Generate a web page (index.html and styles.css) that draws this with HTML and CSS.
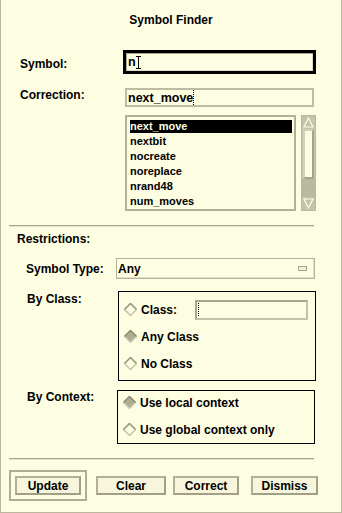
FILE: index.html
```html
<!DOCTYPE html>
<html lang="en">
<head>
  <meta charset="UTF-8">
  <title>Symbol Finder</title>
  <link rel="stylesheet" href="styles.css">
</head>
<body>
  <div class="window">
    <div class="title">Symbol Finder</div>

    <div class="row row-symbol">
      <span class="label">Symbol:</span>
      <div class="field field-active">n<span class="ibeam"></span></div>
    </div>

    <div class="row row-correction">
      <span class="label">Correction:</span>
      <div class="field field-plain">next_move<span class="dotcaret"></span></div>
    </div>

    <div class="listwrap">
      <ul class="list">
        <li class="selected">next_move</li>
        <li>nextbit</li>
        <li>nocreate</li>
        <li>noreplace</li>
        <li>nrand48</li>
        <li>num_moves</li>
      </ul>
      <div class="scrollbar">
        <div class="sb-arrow">
          <svg width="11" height="11" viewBox="0 0 11 11"><polygon points="5.5,1 10,10 1,10" fill="none" stroke="#fdfde4" stroke-width="1.2"/></svg>
        </div>
        <div class="sb-thumb"></div>
        <div class="sb-trough"></div>
        <div class="sb-arrow">
          <svg width="11" height="11" viewBox="0 0 11 11"><polygon points="1,1 10,1 5.5,10" fill="none" stroke="#fdfde4" stroke-width="1.2"/></svg>
        </div>
      </div>
    </div>

    <div class="sep sep-top"></div>

    <div class="section-label">Restrictions:</div>

    <div class="rrow rrow-type">
      <span class="rlabel">Symbol Type:</span>
      <div class="option">Any<span class="opt-ind"></span></div>
    </div>

    <div class="rrow rrow-class">
      <span class="rlabel">By Class:</span>
      <div class="box box-class">
        <div class="radio">
          <svg class="dia" width="13" height="13" viewBox="0 0 13 13"><polygon points="6.5,0.5 12.5,6.5 6.5,12.5 0.5,6.5" fill="#fdfde4" stroke="#c2c0a5" stroke-width="1.4"/><polyline points="0.5,6.5 6.5,0.5 12.5,6.5" fill="none" stroke="#98967c" stroke-width="1.4"/></svg>
          <span class="rtext">Class:</span>
          <div class="classfield"><span class="dotcaret"></span></div>
        </div>
        <div class="radio">
          <svg class="dia" width="13" height="13" viewBox="0 0 13 13"><polygon points="6.5,0.5 12.5,6.5 6.5,12.5 0.5,6.5" fill="#aeac92" stroke="#cfcdb3" stroke-width="1.4"/><polyline points="0.5,6.5 6.5,0.5 12.5,6.5" fill="none" stroke="#86846a" stroke-width="1.4"/></svg>
          <span class="rtext">Any Class</span>
        </div>
        <div class="radio">
          <svg class="dia" width="13" height="13" viewBox="0 0 13 13"><polygon points="6.5,0.5 12.5,6.5 6.5,12.5 0.5,6.5" fill="#fdfde4" stroke="#c2c0a5" stroke-width="1.4"/><polyline points="0.5,6.5 6.5,0.5 12.5,6.5" fill="none" stroke="#98967c" stroke-width="1.4"/></svg>
          <span class="rtext">No Class</span>
        </div>
      </div>
    </div>

    <div class="rrow rrow-context">
      <span class="rlabel">By Context:</span>
      <div class="box box-context">
        <div class="radio">
          <svg class="dia" width="13" height="13" viewBox="0 0 13 13"><polygon points="6.5,0.5 12.5,6.5 6.5,12.5 0.5,6.5" fill="#aeac92" stroke="#cfcdb3" stroke-width="1.4"/><polyline points="0.5,6.5 6.5,0.5 12.5,6.5" fill="none" stroke="#86846a" stroke-width="1.4"/></svg>
          <span class="rtext">Use local context</span>
        </div>
        <div class="radio">
          <svg class="dia" width="13" height="13" viewBox="0 0 13 13"><polygon points="6.5,0.5 12.5,6.5 6.5,12.5 0.5,6.5" fill="#fdfde4" stroke="#c2c0a5" stroke-width="1.4"/><polyline points="0.5,6.5 6.5,0.5 12.5,6.5" fill="none" stroke="#98967c" stroke-width="1.4"/></svg>
          <span class="rtext">Use global context only</span>
        </div>
      </div>
    </div>

    <div class="sep sep-bottom"></div>

    <div class="buttons">
      <div class="default-frame"><button class="btn btn-update">Update</button></div>
      <button class="btn btn-clear">Clear</button>
      <button class="btn btn-correct">Correct</button>
      <button class="btn btn-dismiss">Dismiss</button>
    </div>
  </div>
</body>
</html>
```

FILE: styles.css
```css
html, body { margin: 0; padding: 0; background: #fdfde2; }
body { font-family: "Liberation Sans", Arial, sans-serif; font-weight: bold; font-size: 12px; color: #000; }

.window { box-sizing: border-box; width: 342px; height: 513px; background: #fdfde2; border: 1px solid #b9b79d; border-top: none; overflow: hidden; }
.title { margin-top: 13px; line-height: 14px; text-align: center; }

.row { display: flex; align-items: flex-start; padding-left: 19px; }
.label { width: 103px; line-height: 14px; }
.row-symbol { margin-top: 23px; }
.row-symbol .label { margin-top: 7px; }
.row-correction { margin-top: 14px; }

.field { box-sizing: border-box; display: flex; align-items: center; line-height: 14px; font-size: 12.5px; }
.field-active { width: 193px; height: 24px; border: 3px solid #000; box-shadow: inset 1px 1px 0 #a9a78b, inset -1px -1px 0 #dcdac0; padding-left: 2px; }
.field-plain { width: 189px; height: 19px; margin-left: 2px; border: 2px solid #bdbba1; padding-left: 1px; }
.ibeam { width: 5px; height: 13px; box-sizing: border-box; border-top: 1px solid #000; border-bottom: 1px solid #000; background: linear-gradient(#000, #000) center / 1px 100% no-repeat; }
.dotcaret { width: 1px; height: 15px; border-left: 1px dotted #000; }

.listwrap { display: flex; margin-top: 8px; padding-left: 124px; }
.list { box-sizing: border-box; width: 171px; height: 96px; margin: 0; padding: 3px 2px 0 3px; list-style: none; border: 2px solid #b2b096; font-size: 11px; }
.list li { height: 13px; line-height: 13px; margin-bottom: 2px; white-space: nowrap; }
.list li.selected { background: #000; color: #fdfde2; }

.scrollbar { box-sizing: border-box; width: 15px; height: 96px; margin-left: 5px; display: flex; flex-direction: column; background: #c9c7ad; border: 1px solid #b9b79d; }
.sb-arrow { height: 13px; display: flex; align-items: center; justify-content: center; background: #c5c3a9; }
.sb-thumb { box-sizing: border-box; height: 50px; margin: 0 1px; border: 2px solid #a6a488; border-left-color: #d2d0b6; border-top-color: #d2d0b6; background: #fdfde2; }
.sb-trough { flex: 1; background: #bab89e; }

.sep { height: 1px; border-top: 1px solid #a9a78b; background: #e3e1c7; margin-left: 8px; margin-right: 27px; }
.sep-top { margin-top: 14px; }
.sep-bottom { margin-top: 14px; }

.section-label { margin-top: 5px; padding-left: 16px; line-height: 14px; }

.rrow { display: flex; align-items: flex-start; padding-left: 25px; }
.rlabel { width: 90px; line-height: 14px; flex-shrink: 0; }
.rrow-type { margin-top: 12px; align-items: center; }
.rrow-class { margin-top: 12px; }
.rrow-class .rlabel { margin-top: 1px; padding-left: 1px; }
.rrow-context { margin-top: 9px; }
.rrow-context .rlabel { padding-left: 1px; }

.option { box-sizing: border-box; width: 199px; height: 21px; display: flex; align-items: center; justify-content: space-between; padding: 0 7px 0 1px; border: 1px solid #b4b298; box-shadow: inset -1px -1px 0 #e2e0c6; }
.opt-ind { width: 9px; height: 5px; border: 1px solid #a9a78b; box-sizing: border-box; background: #f1efd5; }

.box { box-sizing: border-box; width: 198px; border: 1px solid #000; padding-left: 5px; }
.box-class { height: 90px; padding-top: 4px; margin-left: 1px; }
.box-class .radio { height: 27px; }
.box-context { height: 54px; padding-top: 0; }
.box-context .radio { height: 23px; margin-bottom: 4px; }

.radio { display: flex; align-items: center; }
.dia { flex-shrink: 0; }
.rtext { margin-left: 4px; line-height: 14px; }
.classfield { box-sizing: border-box; width: 113px; height: 20px; margin-left: 18px; border: 2px solid #c4c2a8; border-left-color: #a8a68a; border-top-color: #a8a68a; display: flex; align-items: center; padding-left: 1px; }
.classfield .dotcaret { height: 13px; }

.buttons { display: flex; align-items: center; margin-top: 10px; padding-left: 8px; }
.default-frame { box-sizing: border-box; border: 2px solid #aeac92; padding: 4px; }
.btn { box-sizing: border-box; height: 19px; padding: 0; font-family: "Liberation Sans", Arial, sans-serif; font-weight: bold; font-size: 12px; color: #000; background: #f7f6dc; border: 2px solid #b2b096; border-right-color: #a19f85; border-bottom-color: #a19f85; text-align: center; cursor: pointer; }
.btn-update { width: 66px; display: block; }
.btn-clear { width: 70px; margin-left: 9px; }
.btn-correct { width: 66px; margin-left: 7px; }
.btn-dismiss { width: 67px; margin-left: 12px; }
```
